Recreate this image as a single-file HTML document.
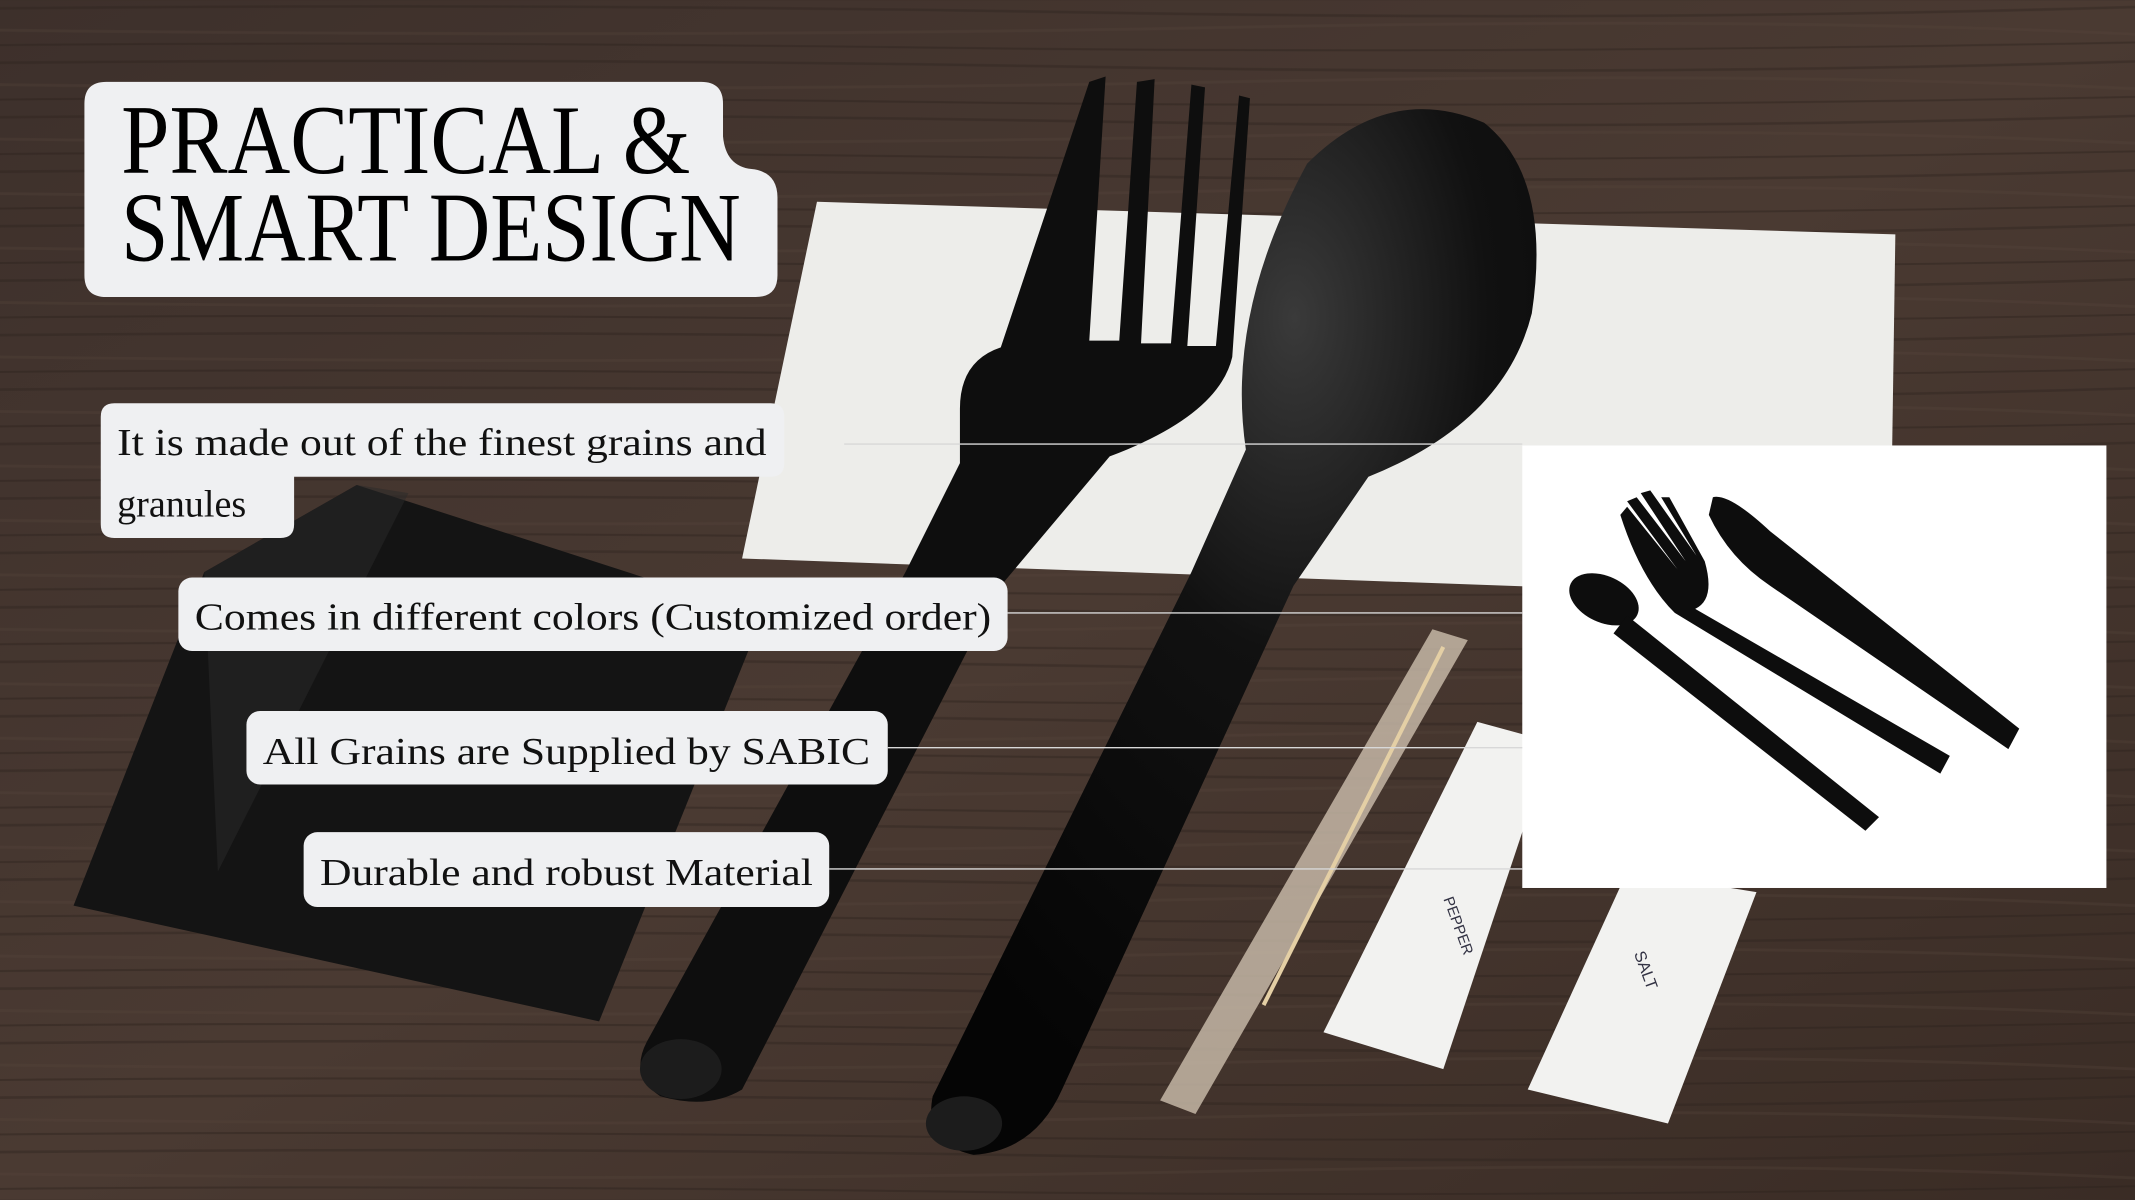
<!DOCTYPE html>
<html><head><meta charset="utf-8"><style>html,body{margin:0;padding:0;width:2135px;height:1200px;overflow:hidden;background:#3a2d27}svg{display:block}</style></head><body>
<svg width="2135" height="1200" viewBox="0 0 1568 881" xmlns="http://www.w3.org/2000/svg">
<defs>
<linearGradient id="wood" x1="0" y1="0" x2="1" y2="1">
<stop offset="0" stop-color="#3d302b"/><stop offset=".5" stop-color="#4a3a32"/><stop offset="1" stop-color="#3a2c25"/></linearGradient>
<pattern id="grain" width="1568" height="40" patternUnits="userSpaceOnUse">
<path d="M0 6 Q400 2 800 9 T1568 5" stroke="#2e231f" stroke-width="2" fill="none" opacity=".4"/>
<path d="M0 22 Q500 28 900 20 T1568 25" stroke="#58463c" stroke-width="2" fill="none" opacity=".3"/>
<path d="M0 33 Q300 30 700 35 T1568 31" stroke="#2b211c" stroke-width="1.5" fill="none" opacity=".4"/>
</pattern>
<radialGradient id="shine" cx=".6" cy=".2" r=".8"><stop offset="0" stop-color="#3a3a3a"/><stop offset=".4" stop-color="#111"/><stop offset="1" stop-color="#050505"/></radialGradient>
</defs>
<rect width="1568" height="881" fill="url(#wood)"/>
<rect width="1568" height="881" fill="url(#grain)"/>
<!-- napkin -->
<polygon points="600,148 1392,172 1388,440 545,410" fill="#ededea"/>
<!-- black packet -->
<polygon points="262,356 560,452 440,750 54,665 150,420" fill="#141414"/>
<polygon points="262,356 300,362 160,640 150,420" fill="#2a2a2a" opacity=".5"/>
<!-- toothpick packet -->
<polygon points="1052,462 1078,470 878,818 852,808" fill="#cdbfae" opacity=".8"/>
<line x1="1060" y1="475" x2="928" y2="738" stroke="#e4cfa5" stroke-width="3"/>
<!-- pepper / salt -->
<polygon points="1085,530 1140,545 1060,785 972,758" fill="#f2f2f0"/>
<polygon points="1195,640 1290,655 1225,825 1122,800" fill="#f2f2f0"/>
<text x="1200" y="700" font-family="Liberation Sans" font-size="12" fill="#334" transform="rotate(70 1200 700)">SALT</text>
<text x="1060" y="660" font-family="Liberation Sans" font-size="11" fill="#334" transform="rotate(70 1060 660)">PEPPER</text>
<!-- fork -->
<path d="M705,300 Q705,265 735,255 L800,60 L812,56 L800,250 L822,250 L835,60 L848,58 L838,252 L860,252 L875,62 L885,64 L872,254 L893,254 L910,70 L918,72 L905,262 Q895,305 815,335 L735,430 L545,800 Q520,815 485,805 Q462,790 475,765 L665,420 L705,340 Z" fill="#0e0e0e"/>
<ellipse cx="500" cy="785" rx="30" ry="22" fill="#1c1c1c"/>
<!-- spoon -->
<path d="M915,330 Q900,230 960,120 Q1020,60 1090,90 Q1140,130 1125,230 Q1105,310 1005,350 L950,430 L780,800 Q760,845 715,848 Q678,840 685,805 L875,420 Z" fill="url(#shine)"/>
<ellipse cx="708" cy="825" rx="28" ry="20" fill="#1c1c1c"/>
<!-- product image panel -->
<rect x="1118" y="327" width="429" height="325" fill="#ffffff"/>
<g fill="#0d0d0d">
<ellipse cx="1178" cy="440" rx="27" ry="17" transform="rotate(25 1178 440)"/>
<path d="M1195,452 L1380,600 L1370,610 L1185,465 Z"/>
<path d="M1190,378 L1195,372 L1232,418 L1195,368 L1202,365 L1238,412 L1205,362 L1212,360 L1246,408 L1220,365 L1226,365 L1252,412 Q1260,440 1245,447 L1432,555 L1425,568 L1230,450 Q1205,425 1190,378 Z"/>
<path d="M1258,365 Q1270,362 1300,390 L1483,535 L1475,550 L1300,430 Q1270,410 1255,378 Z"/>
</g>
<!-- connector lines -->
<g stroke="#d8d8d8" stroke-width="1">
<line x1="620" y1="326" x2="1118" y2="326"/>
<line x1="740" y1="450" x2="1118" y2="450"/>
<line x1="652" y1="549" x2="1118" y2="549"/>
<line x1="609" y1="638" x2="1118" y2="638"/>
</g>
<!-- title -->
<path d="M78,60 H515 Q531,60 531,76 V100 Q533,122 552,124 Q571,126 571,145 V202 Q571,218 555,218 H78 Q62,218 62,202 V76 Q62,60 78,60 Z" fill="#eff0f2"/>
<g font-family="Liberation Serif, serif" fill="#000">
<text x="89" y="127" font-size="72" textLength="418" lengthAdjust="spacingAndGlyphs">PRACTICAL &amp;</text>
<text x="89" y="191" font-size="72" textLength="455" lengthAdjust="spacingAndGlyphs">SMART DESIGN</text>
</g>
<!-- labels -->
<g fill="#eff0f2">
<path d="M84,296 H566 Q576,296 576,306 V340 Q576,350 566,350 H216 V385 Q216,395 206,395 H84 Q74,395 74,385 V306 Q74,296 84,296 Z"/>
<rect x="131" y="424" width="609" height="54" rx="10"/>
<rect x="181" y="522" width="471" height="54" rx="10"/>
<rect x="223" y="611" width="386" height="55" rx="10"/>
</g>
<g font-family="Liberation Serif, serif" font-size="28" fill="#111">
<text x="86" y="334" textLength="477" lengthAdjust="spacingAndGlyphs">It is made out of the finest grains and</text>
<text x="86" y="379">granules</text>
<text x="143" y="462" textLength="585" lengthAdjust="spacingAndGlyphs">Comes in different colors (Customized order)</text>
<text x="193" y="561" textLength="446" lengthAdjust="spacingAndGlyphs">All Grains are Supplied by SABIC</text>
<text x="235" y="650" textLength="362" lengthAdjust="spacingAndGlyphs">Durable and robust Material</text>
</g>
</svg>
</body></html>
